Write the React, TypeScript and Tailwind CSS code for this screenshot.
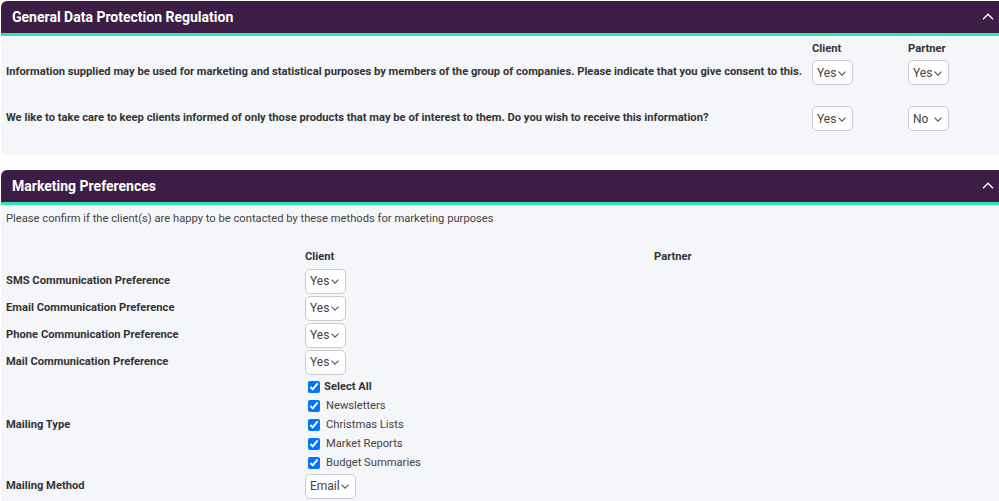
import React from 'react'

function Chevron({ className = '' }: { className?: string }) {
  return (
    <svg width="8" height="5" viewBox="0 0 8 5" className={className} fill="none" stroke="currentColor" strokeWidth="1.1">
      <path d="M0.5 0.7 4 4.2 7.5 0.7" />
    </svg>
  )
}

function Select({ value, width = 'w-[41px]' }: { value: string; width?: string }) {
  return (
    <div className={`${width} h-[25px] flex items-center justify-between pl-[4px] pr-[6px] bg-white border border-[#c9cbd1] rounded-[5px] text-[12px] font-normal text-[#444] shrink-0`}>
      <span>{value}</span>
      <Chevron className="text-[#555] mt-[1px]" />
    </div>
  )
}

function PanelHeader({ title }: { title: string }) {
  return (
    <div className="h-[35px] bg-[#3c1d46] rounded-t-[6px] border-b-[3px] border-[#2ee6a6] flex items-center justify-between pl-[11px] pr-[11px]">
      <span className="text-white font-bold text-[14px] mt-[1px]">{title}</span>
      <svg width="12" height="7" viewBox="0 0 12 7" fill="none" stroke="white" strokeWidth="1.4" className="mb-[1px]">
        <path d="M1 6.2 6 1.3 11 6.2" />
      </svg>
    </div>
  )
}

function Check({ label, bold = false }: { label: string; bold?: boolean }) {
  return (
    <label className="h-[19px] flex items-center">
      <input type="checkbox" defaultChecked className="w-[12px] h-[12px] ml-[3px] mr-[3px] accent-[#0075ff]" />
      <span className={bold ? 'font-bold text-[#333] ml-[1px]' : 'font-normal text-[#444] ml-[3px]'}>{label}</span>
    </label>
  )
}

export default function App() {
  const prefs = ['SMS Communication Preference', 'Email Communication Preference', 'Phone Communication Preference', 'Mail Communication Preference']

  return (
    <div className="w-[999px] h-[501px] overflow-hidden bg-white pl-[1px] pt-[1px] font-['Roboto',sans-serif] text-[11.2px] text-[#333]">
      <div className="w-[1004px]">
        {/* GDPR */}
        <section>
          <PanelHeader title="General Data Protection Regulation" />
          <div className="bg-[#f5f6fa] rounded-b-[6px] h-[119px] pl-[5px]">
            <div className="flex h-[22px] items-end font-bold">
              <div className="w-[806px]" />
              <div className="w-[96px]">Client</div>
              <div>Partner</div>
            </div>
            <div className="flex items-center h-[25px] mt-[2px] font-bold">
              <div className="w-[806px]">Information supplied may be used for marketing and statistical purposes by members of the group of companies. Please indicate that you give consent to this.</div>
              <div className="w-[96px]"><Select value="Yes" /></div>
              <Select value="Yes" />
            </div>
            <div className="flex items-center h-[25px] mt-[21px] font-bold">
              <div className="w-[806px]">We like to take care to keep clients informed of only those products that may be of interest to them. Do you wish to receive this information?</div>
              <div className="w-[96px]"><Select value="Yes" /></div>
              <Select value="No" />
            </div>
          </div>
        </section>

        {/* Marketing */}
        <section className="mt-[15px]">
          <PanelHeader title="Marketing Preferences" />
          <div className="bg-[#f5f6fa] h-[300px] pl-[5px]">
            <p className="pt-[6px] text-[#444]">Please confirm if the client(s) are happy to be contacted by these methods for marketing purposes</p>
            <div className="flex font-bold mt-[21px] h-[17px] items-center">
              <div className="w-[299px]" />
              <div className="w-[349px]">Client</div>
              <div>Partner</div>
            </div>
            <div className="mt-[3px] flex flex-col gap-[2px]">
              {prefs.map(p => (
                <div key={p} className="flex items-center h-[25px]">
                  <div className="w-[299px] font-bold">{p}</div>
                  <Select value="Yes" />
                </div>
              ))}
            </div>
            <div className="flex items-center mt-[3px]">
              <div className="w-[299px] font-bold">Mailing Type</div>
              <div className="flex flex-col">
                <Check label="Select All" bold />
                <Check label="Newsletters" />
                <Check label="Christmas Lists" />
                <Check label="Market Reports" />
                <Check label="Budget Summaries" />
              </div>
            </div>
            <div className="flex items-center h-[25px] mt-[1px]">
              <div className="w-[299px] font-bold">Mailing Method</div>
              <Select value="Email" width="w-[51px]" />
            </div>
          </div>
        </section>
      </div>
    </div>
  )
}
